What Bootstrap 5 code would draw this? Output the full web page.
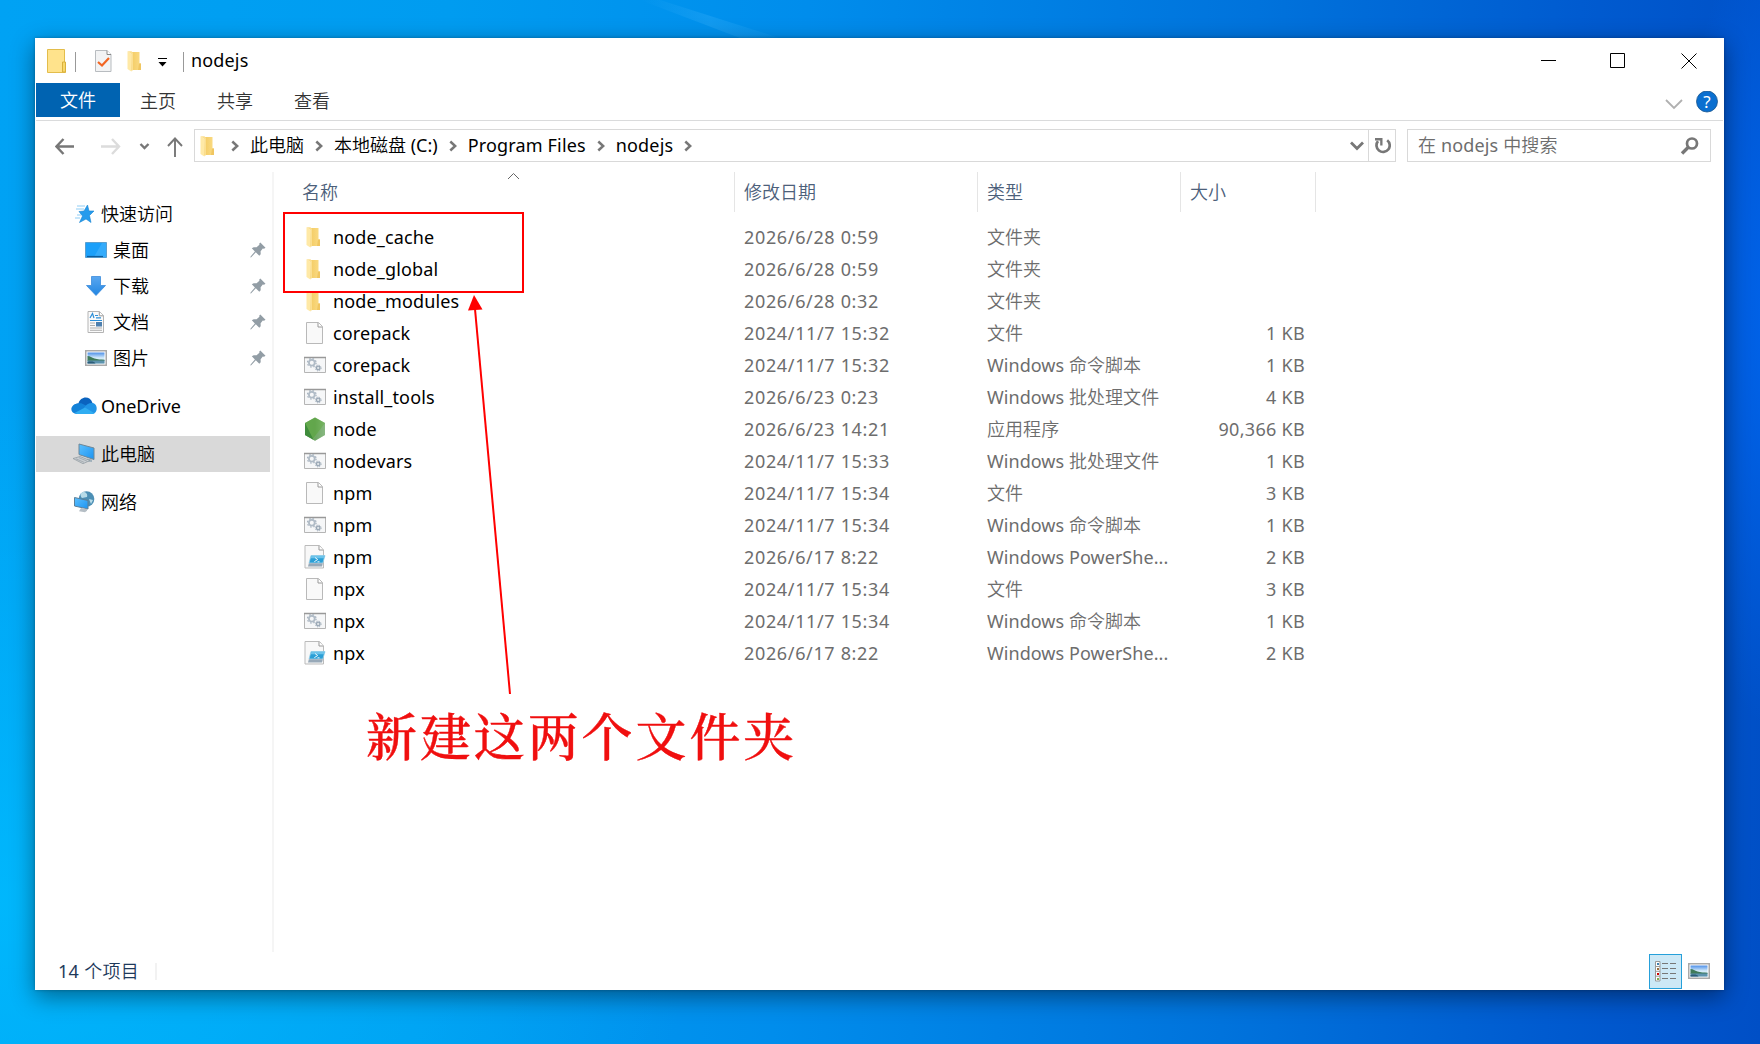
<!DOCTYPE html>
<html lang="zh-CN">
<head>
<meta charset="utf-8">
<title>nodejs</title>
<link href="https://cdn.jsdelivr.net/npm/bootstrap@5.3.0/dist/css/bootstrap.min.css" rel="stylesheet">
<style>
html,body{height:100%}
body{font-family:"Noto Sans","Noto Sans CJK SC",sans-serif;font-size:18px;font-weight:350;line-height:32px;color:#000;overflow:hidden;
 padding:38px 36px 54px 35px;
 background:
 radial-gradient(ellipse 120px 420px at 1790px 320px,rgba(0,110,255,.75),transparent),
 radial-gradient(ellipse 700px 500px at 0 900px,rgba(0,190,255,.75),transparent),
 linear-gradient(92deg,#00a2f4 0%,#009cf0 25%,#008dec 45%,#0073dc 70%,#005bd0 88%,#004fc6 100%)}
svg{display:block;flex:none}
.explorer{box-shadow:0 7px 22px rgba(0,0,0,.42),0 0 3px rgba(0,0,0,.25)}
.titlebar{height:45px;padding:0 27px 0 12px}
.title-txt{margin-left:7px;padding-bottom:2px;font-weight:400;letter-spacing:.15px}
.vbar{width:1px;height:20px;margin-top:2px;background:#999}
.drop-ico{margin:4px 16px 0 11px}
.tb-folder{margin-left:11px}
.ribbon{height:38px;margin:0 1px;border-bottom:1px solid #dadbdc}
.tab-file{width:84px;height:34px;background:#0063b1;color:#fff;line-height:34px}
.tab-item{margin-left:41px;color:#333;line-height:36px}
.tab-item:nth-child(2){margin-left:20px}
.addr-row{height:51px;padding:8px 13px 0 20px}
.field-box{height:33px;border:1px solid #d9d9d9;line-height:30px}
.addr-box{width:1202px}
.addr-folder{margin-left:3px}
.crumb-sep{margin-left:11px}
.crumb-txt{margin-left:11px;margin-top:-2px;font-weight:350}
.crumb-latin{letter-spacing:.16px;font-weight:400}
.find-box{width:304px;color:#6d6d6d}
.find-txt{padding-left:2px;padding-bottom:2px;letter-spacing:.15px}
.refresh-cell{width:27px;border-left:1px solid #d9d9d9}
.side-nav{width:239px;padding:24px 1px 0;border-right:2px solid #f5f5f5}
.side-item{height:36px;width:234px;line-height:36px;padding-left:34px}
.side-item svg{margin-right:3px}
.side-item .wide-ico{margin-left:-1px;margin-right:4px}
.side-item.sub-item{padding-left:49px}
.side-item.sub-item svg{margin-right:6px}
.side-item.sub-item svg:last-child{margin:0 4px 0 auto}
.spaced{margin-top:12px}
.chosen{background:#d9d9d9}
.col-head{height:40px;color:#4c607a;line-height:40px}
.col-head div{border-right:1px solid #e5e5e5}
.c-name{width:461px;padding-left:30px}
.col-head .c-name{padding-left:28px}
.c-date{width:243px;padding-left:9px}
.c-type{width:203px;padding-left:9px}
.c-size{width:135px;padding-left:9px}
.file-row{height:32px;color:#6d6d6d}
.file-row .c-name{color:#000;letter-spacing:.15px}
.file-row .c-name svg{margin-right:7px}
.file-row .c-size{text-align:right;padding-right:11px;letter-spacing:.3px}
.file-row .c-date{letter-spacing:.65px}
.file-row .c-type{letter-spacing:.05px}
.file-list{padding-top:9px}
.status{height:38px;padding:0 14px 0 23px;color:#1e395b}
.count-txt{letter-spacing:.3px}
.stat-sep{width:2px;height:17px;margin-left:16px;background:#f2f2f2}
.view-on{width:33px;height:35px;background:#cce8f6;border:1px solid #26a0da}
.view-thumb{margin-left:6px}
.overlay{left:0;top:0;pointer-events:none}
.note{left:366px;top:696px;font-family:"Noto Serif CJK SC","Noto Serif SC","SimSun","Noto Sans CJK SC",serif;font-weight:500;font-size:51px;letter-spacing:2.9px;line-height:76px;color:#f00f0f;-webkit-text-stroke:.4px #f00f0f;white-space:nowrap}
</style>
<script src="https://cdn.jsdelivr.net/npm/bootstrap@5.3.0/dist/js/bootstrap.bundle.min.js"></script>
</head>
<body>
<svg width="0" height="0" class="position-absolute">
<defs>
<linearGradient id="gFold" x1="0" x2="1"><stop offset="0" stop-color="#f3cb63"/><stop offset="1" stop-color="#fbdc86"/></linearGradient>
<linearGradient id="gScr" x1="0" y1="0" x2="1" y2="1"><stop offset="0" stop-color="#5cc0ff"/><stop offset="1" stop-color="#1b93f0"/></linearGradient>
<linearGradient id="gSky" x1="0" y1="0" x2="0" y2="1"><stop offset="0" stop-color="#4d8fe8"/><stop offset=".5" stop-color="#d6ecfa"/><stop offset="1" stop-color="#bfe0f0"/></linearGradient>
<linearGradient id="gNode" x1="0" x2="1"><stop offset="0" stop-color="#5a9f4a"/><stop offset=".5" stop-color="#57994a"/><stop offset="1" stop-color="#86b87e"/></linearGradient>
<linearGradient id="gDown" x1="0" y1="0" x2="0" y2="1"><stop offset="0" stop-color="#5aa7f0"/><stop offset="1" stop-color="#2186e2"/></linearGradient>
<linearGradient id="gBeam" x1="0" x2="1"><stop offset="0" stop-color="#5ac0ff" stop-opacity="0"/><stop offset=".5" stop-color="#5ac0ff" stop-opacity=".2"/><stop offset="1" stop-color="#5ac0ff" stop-opacity=".05"/></linearGradient>
<symbol id="folder" viewBox="0 0 22 22"><path d="M7 2h7.500v11.500H16V20H6z" fill="url(#gFold)"/><path d="M14 13.500h2V20h-3z" fill="#f0c661"/><path d="M2.500 1.300 6.300 4v17.500L2.500 19z" fill="#ffe9a6"/><path d="M2.500 1.300h4L8 3v17l-1.700 1.500V4z" fill="#fbdf91"/></symbol>
<symbol id="page" viewBox="0 0 22 22"><path d="M2.500.5h12l4 4v17h-16z" fill="#f9f9f9" stroke="#b9b9b9"/><path d="M14 .8v4.200h4.200" fill="#fff" stroke="#999"/></symbol>
<symbol id="gears" viewBox="0 0 22 22"><path d="M.5 3.500h21v15H.5z" fill="#f6f7f8" stroke="#b5b5b5"/><path d="M0 3.500h22" stroke="#999" stroke-width="1.500"/><circle cx="7.800" cy="8.800" r="2.900" fill="none" stroke="#b0bbc6" stroke-width="1.800"/><circle cx="7.800" cy="8.800" r="4.300" fill="none" stroke="#a6b2bf" stroke-width="1.200" stroke-dasharray="1.600 1.800"/><circle cx="14.200" cy="14" r="1.800" fill="#dfe4e8" stroke="#98a6b4" stroke-width="1.300"/><circle cx="14.200" cy="14" r="2.900" fill="none" stroke="#a0adba" stroke-dasharray="1.200 1.100"/></symbol>
<symbol id="ps" viewBox="0 0 22 24"><path d="M1 .5h14.500l4 4.500v18H1z" fill="#f8f8f8" stroke="#bbb"/><path d="M15 .8V5h4.300" fill="#fff" stroke="#999"/><path d="M7 10.500h14L18.800 18H5z" fill="#2b9fd6" stroke="#9cd0e8" stroke-width=".8"/><path d="M7.300 10.700h13.400l-.8 2.500H6.600z" fill="#6cc3ea"/><path d="m11 12.500 2.700 2-3.400 2.200M13.500 16.800h2" fill="none" stroke="#e8f6fc"/><path d="M4.800 18.300 4 21.500h14l.9-3.200z" fill="#98a9b8"/></symbol>
<symbol id="nodeapp" viewBox="0 0 22 24"><path d="M11 .5 21 6v12l-10 5.700L1 18V6z" fill="url(#gNode)"/><path d="M11 .5 21 6 9 23 1 6z" fill="#6cb04e" opacity=".55"/><path d="M1 6 9.500 22.800 1 18z" fill="#3f8c3c"/><path d="M21 6v12l-10 5.700L8.800 22z" fill="#8bb986" opacity=".45"/></symbol>
<symbol id="photo" viewBox="0 0 22 16"><path d="M.75.75h20.500v14.500H.75z" fill="#fff" stroke="#a9a9a9" stroke-width="1.500"/><path d="M2.500 2.500h17v11h-17z" fill="url(#gSky)"/><path d="M2.500 6c3 0 4 1.500 7 2.500s6.500 1 10 1.300V11h-17z" fill="#3f7a5a"/><path d="M2.500 10.500h17v3h-17z" fill="#5d93ae"/><path d="M2.500 12c4-1 6.500-.5 8 1.500h-8z" fill="#2c5c78"/></symbol>
<symbol id="pin" viewBox="0 0 16 16"><path d="m10.300.5 5.200 5.200-1.500 1-1.200-.1-2.200 2.600.1 3-1.400 1.600-3.500-3.500L1.200 15.300.3 15.500l.3-1L4.900 9.500 1.800 6.300l1.900-1.100 2.900.1 2.800-2.500-.1-1.300z" fill="#929da5"/></symbol>
<symbol id="crumb" viewBox="0 0 8 12"><path d="m1.300 1.500 4.900 4.500-4.900 4.500" fill="none" stroke="#777" stroke-width="2.500"/></symbol>
</defs>
</svg>
<svg class="overlay position-absolute" width="900" height="38" viewBox="0 0 900 38"><path d="M640 0h20l120 38h-40z" fill="url(#gBeam)"/></svg>

<main class="explorer position-relative bg-white h-100 d-flex flex-column">
 <header class="titlebar d-flex align-items-center">
  <svg width="20" height="24" viewBox="0 0 20 24"><path d="M.5.5h17V14l1 1v8.500H.5z" fill="#ffe38c" stroke="#e3bd4b"/><path d="M15.500 13h3v10h-3z" fill="#f9d869" stroke="#d9b03d"/></svg>
  <span class="vbar ms-2"></span>
  <svg class="ms-3" width="22" height="22" viewBox="-3 0 22 22"><path d="M.5.5H12l4 4v17H.5z" fill="#f2f3f4" stroke="#b8bcc0"/><path d="M12 .5v4h4" fill="#fff" stroke="#888"/><path d="m3 12 4 3.500 7-7.500" fill="none" stroke="#f26522" stroke-width="2.200"/></svg>
  <svg width="22" height="22" class="tb-folder"><use href="#folder"/></svg>
  <svg class="drop-ico" width="9" height="9" viewBox="0 0 9 9"><path d="M0 .5h9" stroke="#000"/><path d="M.5 4h8l-4 4.500z"/></svg>
  <span class="vbar"></span><span class="title-txt flex-grow-1">nodejs</span>
  <svg width="156" height="16" viewBox="0 0 156 16" fill="none" stroke="#000"><path d="M0 7.500h15M69.500.5h14v14h-14zM140.500.5l15 15M155.500.5l-15 15"/></svg>
 </header>

 <nav class="ribbon d-flex align-items-start">
  <div class="tab-file text-center">文件</div><div class="tab-item">主页</div><div class="tab-item">共享</div><div class="tab-item">查看</div>
  <div class="ms-auto d-flex align-items-center me-1 pt-2 gap-2">
   <svg width="18" height="12" viewBox="0 0 18 12"><path d="m1 1 8 8 8-8" fill="none" stroke="#b0b0b0" stroke-width="1.800"/></svg>
   <svg class="help-ico ms-1 mb-1" width="24" height="23" viewBox="0 0 24 23"><circle cx="12" cy="10.500" r="10.500" fill="#0a6fd0" stroke="#12508c" stroke-width=".8"/><text x="12" y="16.500" font-size="17" font-weight="400" text-anchor="middle" fill="#fff">?</text></svg>
  </div>
 </nav>

 <div class="addr-row d-flex">
  <svg width="139" height="34" viewBox="0 0 139 34" fill="none" stroke="#777" stroke-width="2.400"><path d="M19 17.500H2M8.500 10 1.500 17.500l7 7.500"/><path d="M46 17.500h17M57 10l7 7.500-7 7.500" stroke="#dcdcdc"/><path d="m85.500 15 4 4 4-4"/><path d="M120 28V10M113 17l7-7.500 7 7.500" stroke-width="1.900"/></svg>
  <div class="field-box addr-box d-flex align-items-center">
   <svg class="addr-folder" width="22" height="22"><use href="#folder"/></svg>
   <svg class="crumb-sep" width="8" height="12"><use href="#crumb"/></svg><span class="crumb-txt">此电脑</span>
   <svg class="crumb-sep" width="8" height="12"><use href="#crumb"/></svg><span class="crumb-txt">本地磁盘 <span class="fw-normal">(C:)</span></span>
   <svg class="crumb-sep" width="8" height="12"><use href="#crumb"/></svg><span class="crumb-txt crumb-latin">Program Files</span>
   <svg class="crumb-sep" width="8" height="12"><use href="#crumb"/></svg><span class="crumb-txt crumb-latin">nodejs</span>
   <svg class="crumb-sep" width="8" height="12"><use href="#crumb"/></svg>
   <svg class="ms-auto me-1" width="14" height="10" viewBox="0 0 14 10"><path d="m1 1.500 6 6 6-6" fill="none" stroke="#777" stroke-width="2.800"/></svg>
   <div class="refresh-cell h-100 d-flex align-items-center justify-content-center"><svg width="18" height="18" viewBox="0 0 18 18"><path d="M14.200 3.200A6.600 6.600 0 1 1 5 4.200" fill="none" stroke="#777" stroke-width="2.700"/><path d="M2 1h7.500v7.500H7.200V3.500H2z" fill="#777"/></svg></div>
  </div>
  <div class="field-box find-box ms-auto d-flex align-items-center justify-content-between ps-2"><span class="find-txt">在 <span class="fw-normal">nodejs</span> 中搜索</span>
   <svg class="me-2" width="24" height="18" viewBox="0 0 24 18" fill="none" stroke="#777"><circle cx="14" cy="6.500" r="5" stroke-width="2.700"/><path d="M10.500 10 4 16.500" stroke-width="3.400"/></svg></div>
 </div>

 <section class="d-flex flex-grow-1">
  <aside class="side-nav">
   <div class="side-item d-flex align-items-center"><svg width="28" height="20" viewBox="-5 0 28 20"><path d="m12.500 1 1.500 6h5l-4.500 4.500 1.500 7-5-3.500-6.500 3.500L7.500 12 4 7.500l5-.5z" fill="#259bed" stroke="#1683d0" stroke-width=".6"/><path d="M2 2h8M1 5h8M2 11h4M0 14h5" stroke="#8fcdf6" stroke-width="1.100"/></svg>快速访问</div>
   <div class="side-item sub-item d-flex align-items-center"><svg width="22" height="16" viewBox="0 0 22 16"><path d="M.5.5h21v15H.5z" fill="#1ba0fa" stroke="#5b9fcf"/><path d="m9 15 8-14h4v14z" fill="#46b2fc" opacity=".6"/><path d="M2 14.500h16" stroke="#0c5c9c" stroke-width="1.200"/></svg>桌面<svg width="16" height="16"><use href="#pin"/></svg></div>
   <div class="side-item sub-item d-flex align-items-center"><svg width="22" height="20" viewBox="0 0 22 20"><path d="M6.500.5h9v9h5L11 19.500 1.500 9.500h5z" fill="url(#gDown)" stroke="#3b8bdc" stroke-width=".8"/></svg>下载<svg width="16" height="16"><use href="#pin"/></svg></div>
   <div class="side-item sub-item d-flex align-items-center"><svg width="22" height="22" viewBox="0 0 22 22"><path d="M3 .5h11.500l4 4v17H3z" fill="#fafafa" stroke="#b4b4b4"/><path d="M14.300.8v4h4" fill="#fff" stroke="#999"/><path d="m5 7 2.500-4.500L9 7M10 4.500h3M11 6.800h5M5 9.500h12" stroke="#2d8fd8" fill="none" stroke-width="1.200"/><path d="M5 12h5M5 14.500h5M5 17h12M5 19.300h12" stroke="#b0b0b0"/><path d="M11 11h6v4.500h-6z" fill="#4d7fae"/></svg>文档<svg width="16" height="16"><use href="#pin"/></svg></div>
   <div class="side-item sub-item d-flex align-items-center"><svg width="22" height="16"><use href="#photo"/></svg>图片<svg width="16" height="16"><use href="#pin"/></svg></div>
   <div class="side-item spaced d-flex align-items-center fw-normal"><svg class="wide-ico" width="28" height="18" viewBox="-4 0 28 18"><path d="M5.500 6.500C7-.5 17-2 19.500 6l-8 6L2 16.300C-2 14-1 6.500 5.500 6.500z" fill="#0a63bf"/><path d="M5.500 6.500c2-.7 4 0 6 1.300l6 3.500L3.500 17C-5 15.500-2 6.500 5.500 6.500z" fill="#1382d8"/><path d="M19 6c6 0 6.500 10.500 0 11l-8-6c2-3.500 4.500-5 8-5z" fill="#2094e6"/><path d="m1.500 16 10.500-5.500 9.500 5.800c-1 .7-2 .7-3 .7H4z" fill="#30adf2"/></svg>OneDrive</div>
   <div class="side-item spaced chosen d-flex align-items-center"><svg class="wide-ico" width="28" height="22" viewBox="-5 0 28 22"><path d="M5 1 20 5v11.500L5 11.500z" fill="url(#gScr)" stroke="#6f8797"/><path d="M13 15.500v3l5 .5v-2.500" fill="#9fb0bb"/><path d="m-1 15.500 7-2 10 4-7 3.200z" fill="#c9ced2" stroke="#8d969c" stroke-width=".7"/><path d="m2 15.800 8 3.500M5 14.700l8 3.400" stroke="#8d969c" stroke-width=".6"/></svg>此电脑</div>
   <div class="side-item spaced d-flex align-items-center"><svg class="wide-ico" width="28" height="22" viewBox="-5 0 28 22"><circle cx="12.500" cy="8" r="7.800" fill="#4c8fb5"/><path d="M9 1c3 0 5 2 4 5l-5 1c-2-2-2-5 1-6zM15 8l4 1-2 4z" fill="#b7dbe8"/><path d="M.5 6.500 14 9.500v8.500L.5 15z" fill="url(#gScr)" stroke="#5c7f98"/><path d="m7 17-2 3.200 6 1 2-1.500V18z" fill="#b5bec5"/></svg>网络</div>
  </aside>

  <div class="flex-grow-1">
   <div class="col-head d-flex"><div class="c-name">名称</div><div class="c-date">修改日期</div><div class="c-type">类型</div><div class="c-size">大小</div></div>
   <div class="file-list" id="fileList"></div>
  </div>
 </section>

 <footer class="status d-flex align-items-center">
  <span class="me-auto d-flex align-items-center"><span class="count-txt"><span class="fw-normal">14</span> 个项目</span><i class="stat-sep"></i></span>
  <div class="view-on d-flex align-items-center justify-content-center"><svg width="21" height="21" viewBox="0 0 21 21"><path d="M.5.5h4.500v19.500H.5zM.5 5.500H5M.5 10.300H5M.5 15.200H5" fill="#fff" stroke="#999"/><path d="M7 2.500h6M15 2.500h6M7 7.500h6M15 7.500h6M7 12.500h6M15 12.500h6M7 17.500h6M15 17.500h6" stroke="#777"/><path d="M2 2h2v2H2z" fill="#3a7fb0"/><path d="M2 7h2v2H2z" fill="#997040"/><path d="M2 12h2v2H2z" fill="#c00"/><path d="M2 17h2v2H2z" fill="#7fae4b"/></svg></div>
  <svg class="view-thumb" width="22" height="16"><use href="#photo"/></svg>
 </footer>
</main>

<svg class="overlay position-absolute" width="1760" height="1044" viewBox="0 0 1760 1044" fill="none" stroke="#f00" stroke-width="2"><path d="M284 213h239v79H284z"/><path d="m510 694-35-385"/><path d="m474 295 8.500 14.500-14.500 1z" fill="#f00" stroke="none"/><path d="m508 179 5.500-5.500 5.500 5.500" stroke="#666" stroke-width="1"/></svg>
<div class="note position-absolute">新建这两个文件夹</div>

<script>
const files = [
 ["folder","node_cache","2026/6/28 0:59","文件夹",""],
 ["folder","node_global","2026/6/28 0:59","文件夹",""],
 ["folder","node_modules","2026/6/28 0:32","文件夹",""],
 ["page","corepack","2024/11/7 15:32","文件","1 KB"],
 ["gears","corepack","2024/11/7 15:32","Windows 命令脚本","1 KB"],
 ["gears","install_tools","2026/6/23 0:23","Windows 批处理文件","4 KB"],
 ["nodeapp","node","2026/6/23 14:21","应用程序","90,366 KB"],
 ["gears","nodevars","2024/11/7 15:33","Windows 批处理文件","1 KB"],
 ["page","npm","2024/11/7 15:34","文件","3 KB"],
 ["gears","npm","2024/11/7 15:34","Windows 命令脚本","1 KB"],
 ["ps","npm","2026/6/17 8:22","Windows PowerShe...","2 KB"],
 ["page","npx","2024/11/7 15:34","文件","3 KB"],
 ["gears","npx","2024/11/7 15:34","Windows 命令脚本","1 KB"],
 ["ps","npx","2026/6/17 8:22","Windows PowerShe...","2 KB"]
];
const latin = s => s.replace(/[ -~]+/g, m => `<span class="fw-normal">${m}</span>`);
document.getElementById("fileList").innerHTML = files.map(([icon,name,date,type,size]) =>
 `<div class="file-row d-flex"><div class="c-name d-flex align-items-center fw-normal"><svg width="22" height="${icon==="ps"||icon==="nodeapp"?24:22}"><use href="#${icon}"/></svg>${name}</div><div class="c-date fw-normal">${date}</div><div class="c-type">${latin(type)}</div><div class="c-size fw-normal">${size}</div></div>`).join("");
</script>
</body>
</html>
